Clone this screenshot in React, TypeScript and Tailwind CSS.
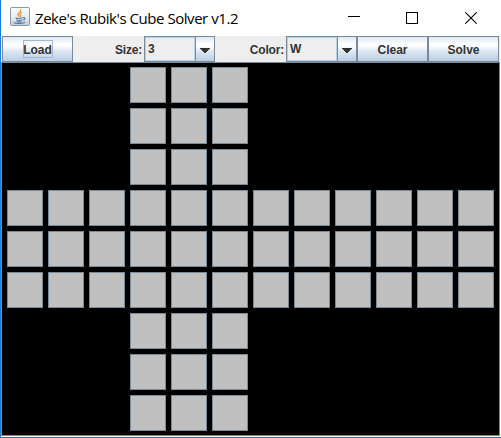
import React from "react";

const METAL = "bg-[linear-gradient(180deg,#dde8f3_0%,#ffffff_30%,#ffffff_36%,#dce7f2_60%,#b8cfe5_100%)]";

function MetalButton({ label, focused = false }: { label: string; focused?: boolean }) {
  return (
    <button className={`flex h-[26px] w-[71px] items-center justify-center border border-[#7a8a99] text-[12px] leading-none font-bold text-[#333] ${METAL}`}>
      <span className={focused ? "flex h-[18px] w-[30px] items-center justify-center border border-[#a3b8cc] pt-px" : "pt-px"}>{label}</span>
    </button>
  );
}

function Combo({ value }: { value: string }) {
  return (
    <div className="flex h-[26px] w-[71px] border border-[#7a8a99]">
      <div className="flex w-[50px] items-center border border-[#b8cfe5] bg-[#eee] pl-[2px] text-[12px] leading-none">{value}</div>
      <div className={`flex flex-1 items-center justify-center border-l border-[#7a8a99] pt-[2px] ${METAL}`}>
        <svg width="10" height="5" viewBox="0 0 10 5" shapeRendering="crispEdges">
          <path d="M0 0H10V1H9V2H8V3H7V4H6V5H4V4H3V3H2V2H1V1H0Z" fill="#333" />
        </svg>
      </div>
    </div>
  );
}

function JavaIcon() {
  return (
    <svg width="20" height="20" viewBox="0 0 20 20" fill="none">
      <defs>
        <linearGradient id="tile" x1="0" y1="0" x2="0" y2="1">
          <stop stopColor="#fdfdfd" />
          <stop offset=".5" stopColor="#e9edf1" />
          <stop offset="1" stopColor="#c3ced8" />
        </linearGradient>
      </defs>
      <rect x=".5" y=".5" width="19" height="18" rx="1.5" fill="url(#tile)" stroke="#8697a7" />
      <path d="M10.8 2.5C11.5 5 7.2 5.6 7.8 7.6C8 8.5 9.2 9 9.2 10M12.2 5.2C9.5 6.2 9.4 7.2 10.5 8.4C11 9 10.6 9.7 10.2 10" stroke="#ed8b3b" strokeWidth="1.2" />
      <path d="M5.5 10.8C7 11.8 10.8 11.8 12.6 10.8M6.2 12.8C8 13.6 10.5 13.6 12 12.8M6.8 14.4C8.2 15 10 15 11.5 14.4M13 10.7C15.8 10 15.5 12.8 12.8 13.3M4 15.2C3.8 16.8 13.5 17 15 15.2" stroke="#557fa5" strokeWidth="1.1" />
    </svg>
  );
}

const STICKER_COLUMNS = 12;

function isSticker(row: number, column: number) {
  return (row >= 3 && row < 6) || (column >= 3 && column < 6);
}

export default function App() {
  return (
    <div className="flex h-[438px] w-[501px] flex-col border-b border-l border-b-[#2079c7] border-l-[#1883d7] bg-white pr-px pb-px font-['Liberation_Sans',Arial,sans-serif] text-[#333]">
      <header className="flex h-9 shrink-0 items-center pl-[9px] text-black">
        <div className="pb-[2px]"><JavaIcon /></div>
        <h1 className="ml-[5px] w-[207px] pb-px font-['Open_Sans','Noto_Sans',sans-serif] text-[15px] leading-5 tracking-[-0.45px] whitespace-nowrap">
          Zeke's Rubik's Cube Solver v1.2
        </h1>
        <div className="ml-[106px] flex items-center gap-[46px]">
          <svg width="12" height="12" viewBox="0 0 12 12"><path d="M0 4.5H12" stroke="black" /></svg>
          <svg width="12" height="12" viewBox="0 0 12 12"><rect x=".5" y=".5" width="11" height="11" fill="none" stroke="black" /></svg>
          <svg className="ml-px" width="12" height="12" viewBox="0 0 12 12"><path d="M.3 .3L11.7 11.7M11.7 .3L.3 11.7" stroke="black" strokeWidth="1.1" /></svg>
        </div>
      </header>
      <div className="ml-px flex h-[26px] shrink-0 bg-[#eee] text-[12px] font-bold">
        <MetalButton label="Load" focused />
        <div className="flex w-[71px] items-center justify-end pt-px pr-[2px] tracking-[-0.2px]">Size:</div>
        <Combo value="3" />
        <div className="flex w-[71px] items-center justify-end pt-px pr-[2px] tracking-[-0.2px]">Color:</div>
        <Combo value="W" />
        <MetalButton label="Clear" />
        <MetalButton label="Solve" />
      </div>
      <main className="grid flex-1 grid-cols-[repeat(12,36px)] content-start gap-[5px] border border-[#7a8a99] bg-black pt-1 pl-[5px]">
        {Array.from({ length: 9 * STICKER_COLUMNS }, (_, i) => {
          const row = Math.floor(i / STICKER_COLUMNS);
          const column = i % STICKER_COLUMNS;
          return <div key={i} className={isSticker(row, column) ? "h-9 border border-[#7a8a99] bg-[#c0c0c0]" : "h-9"} />;
        })}
      </main>
    </div>
  );
}
